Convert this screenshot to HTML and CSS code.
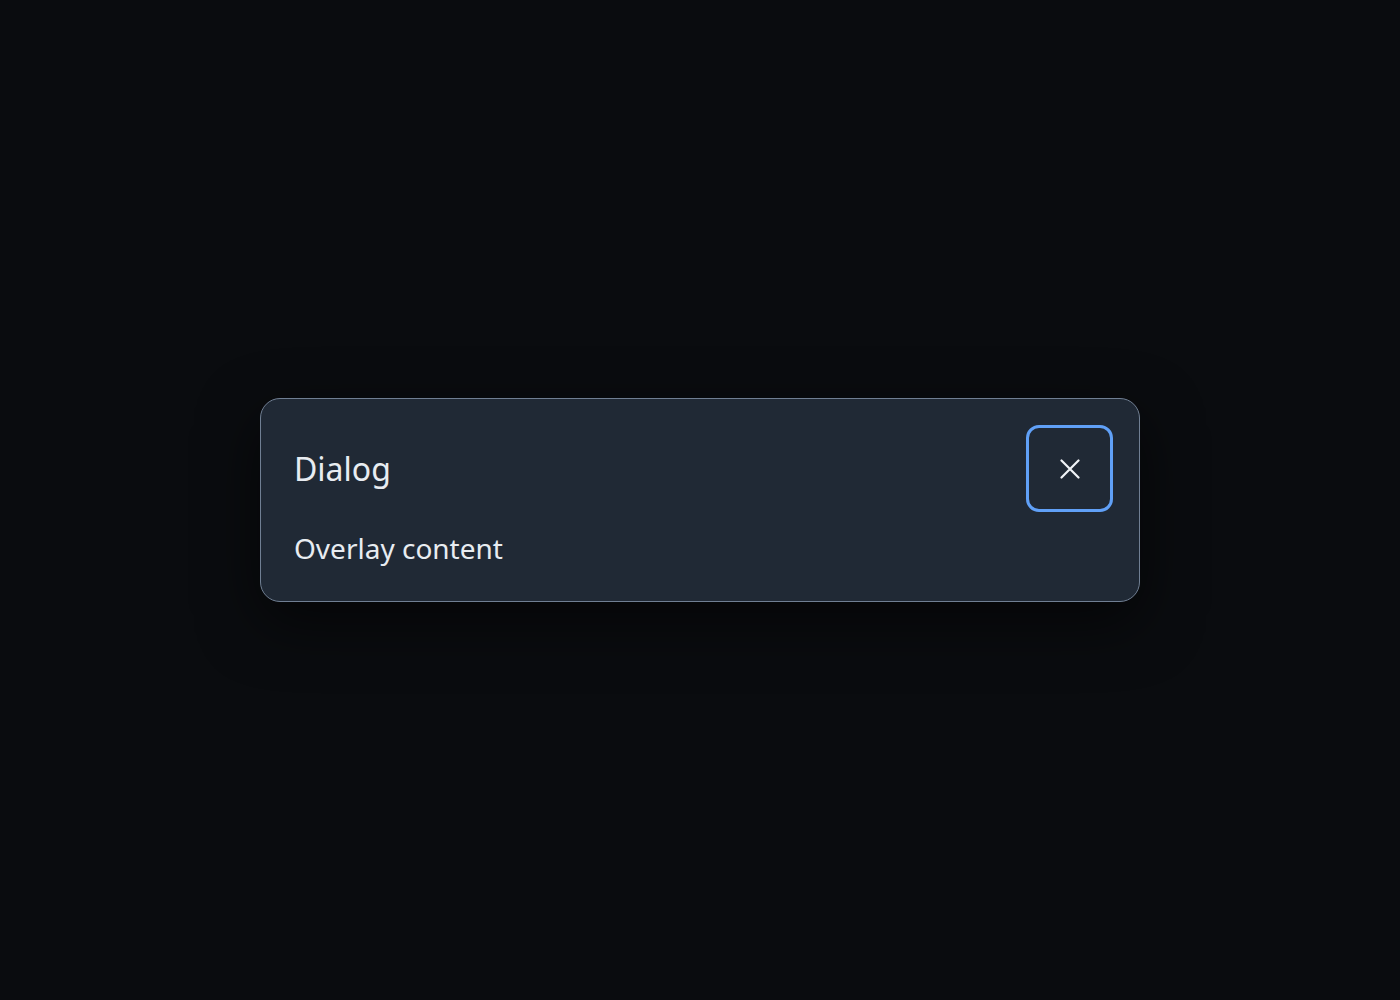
FILE: index.html
```html
<!DOCTYPE html>
<html lang="en">
<head>
    <meta charset="UTF-8">
    <title>Dialog</title>
    <link rel="stylesheet" href="styles.css">
</head>
<body>
    <div class="overlay">
        <div class="dialog" role="dialog" aria-labelledby="dialogTitle">
            <div class="dialog-header">
                <h2 class="dialog-title" id="dialogTitle">Dialog</h2>
                <button class="close-button" aria-label="Close">
                    <svg width="20" height="20" viewBox="0 0 20 20" fill="none" stroke="currentColor" stroke-width="2.2" stroke-linecap="round">
                        <path d="M1.5 1.5 L18.5 18.5 M18.5 1.5 L1.5 18.5"/>
                    </svg>
                </button>
            </div>
            <p class="dialog-body">Overlay content</p>
        </div>
    </div>
</body>
</html>
```

FILE: styles.css
```css
body {
    margin: 0;
    background: #0a0c0f;
    color: #e8ecf1;
    font-family: "Noto Sans", "Open Sans", sans-serif;
    min-height: 100vh;
}

.overlay {
    min-height: 100vh;
    display: flex;
    align-items: center;
    justify-content: center;
}

.dialog {
    width: 880px;
    box-sizing: border-box;
    padding: 26px 26px 35px 33px;
    background: #202935;
    border: 1px solid #707f93;
    border-radius: 20px;
    box-shadow: 0 20px 60px rgba(0, 0, 0, 0.55);
}

.dialog-header {
    display: flex;
    align-items: center;
    justify-content: space-between;
}

.dialog-title {
    margin: 0;
    font-size: 32px;
    font-weight: 400;
    line-height: 1.3;
}

.close-button {
    width: 87px;
    height: 87px;
    box-sizing: border-box;
    border: 3px solid #60a0f7;
    border-radius: 13px;
    background: transparent;
    color: #f1f4f8;
    display: flex;
    align-items: center;
    justify-content: center;
    padding: 0;
    cursor: pointer;
}

.dialog-body {
    margin: 18px 0 0;
    font-size: 28px;
    line-height: 36px;
}
```
